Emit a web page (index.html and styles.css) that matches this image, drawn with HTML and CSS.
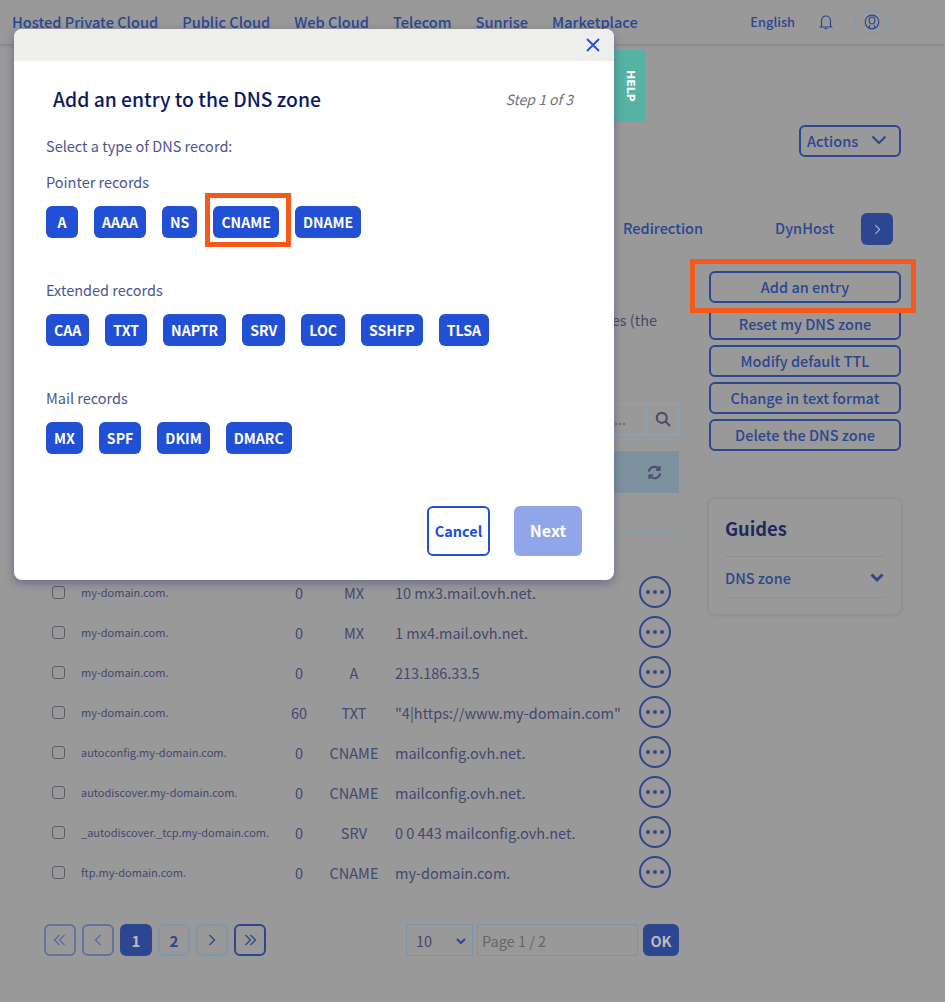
FILE: index.html
```html
<!DOCTYPE html>
<html lang="en">
  <head>
    <meta charset="UTF-8" />
    <title>DNS zone</title>
    <link rel="stylesheet" href="styles.css">
  </head>
  <body>
    <header class="topbar">
      <nav class="topnav">
        <a>Hosted Private Cloud</a>
        <a>Public Cloud</a>
        <a>Web Cloud</a>
        <a>Telecom</a>
        <a>Sunrise</a>
        <a>Marketplace</a>
      </nav>
      <div class="usernav">
        <span class="lang">English</span>
        <svg class="bell" viewBox="0 0 14 16" width="14" height="16" fill="none" stroke="#2c4690" stroke-width="1.2">
          <path d="M2.5 12V6.5a4.5 4.5 0 0 1 9 0V12l1 1H1.500z" />
          <path d="M5.500 14.500h3" />
        </svg>
        <span class="user-pill">
          <svg viewBox="0 0 16 16" width="16" height="16" fill="none" stroke="#2c4690" stroke-width="1.2">
            <circle cx="8" cy="8" r="6.800" />
            <ellipse cx="8" cy="6.500" rx="2.800" ry="3.500" />
            <path d="M5.500 14.500V11M10.500 14.500V11" />
          </svg>
        </span>
      </div>
    </header>

    <div class="help-tab"><span>HELP</span></div>

    <main class="page">
      <div class="page-actions">
        <button class="btn actions-btn">
          Actions
          <svg viewBox="0 0 16 10" width="16" height="10" fill="none" stroke="#2c4690" stroke-width="2"><path d="M1.500 1.500 8 8l6.500-6.500" /></svg>
        </button>
      </div>

      <div class="tabs">
        <div class="tab-list">
          <a>Redirection</a>
          <a>DynHost</a>
        </div>
        <button class="tab-next">
          <svg viewBox="0 0 8 12" width="7" height="11" fill="none" stroke="#a9b4d6" stroke-width="1.300"><path d="M1.500 1 6.500 6l-5 5" /></svg>
        </button>
      </div>

      <div class="columns">
        <section class="zone">
          <p class="zone-intro">es (the</p>
          <div class="search">
            <span class="search-input">...</span>
            <span class="search-btn">
              <svg viewBox="0 0 16 16" width="16" height="16" fill="none" stroke="#4a4d6e" stroke-width="2.200"><circle cx="6.800" cy="6.800" r="5" /><path d="m10.500 10.500 4.500 4.500" /></svg>
            </span>
          </div>
          <div class="table-head">
            <svg viewBox="0 0 16 16" width="15" height="15" fill="none" stroke="#4a4d6e" stroke-width="2"><path d="M2 7a6 6 0 0 1 10.500-3M14 9a6 6 0 0 1-10.500 3" /><path d="M13.500 1v4h-4M2.500 15v-4h4" /></svg>
          </div>
          <div class="row row-empty"></div>
          <div class="row row-empty"></div>

          <div class="row">
            <span class="check"></span><span class="domain">my-domain.com.</span><span class="ttl">0</span><span class="type">MX</span><span class="target">10 mx3.mail.ovh.net.</span><button class="more"><i></i><i></i><i></i></button>
          </div>
          <div class="row">
            <span class="check"></span><span class="domain">my-domain.com.</span><span class="ttl">0</span><span class="type">MX</span><span class="target">1 mx4.mail.ovh.net.</span><button class="more"><i></i><i></i><i></i></button>
          </div>
          <div class="row">
            <span class="check"></span><span class="domain">my-domain.com.</span><span class="ttl">0</span><span class="type">A</span><span class="target">213.186.33.5</span><button class="more"><i></i><i></i><i></i></button>
          </div>
          <div class="row">
            <span class="check"></span><span class="domain">my-domain.com.</span><span class="ttl">60</span><span class="type">TXT</span><span class="target">"4|https://www.my-domain.com"</span><button class="more"><i></i><i></i><i></i></button>
          </div>
          <div class="row">
            <span class="check"></span><span class="domain">autoconfig.my-domain.com.</span><span class="ttl">0</span><span class="type">CNAME</span><span class="target">mailconfig.ovh.net.</span><button class="more"><i></i><i></i><i></i></button>
          </div>
          <div class="row">
            <span class="check"></span><span class="domain">autodiscover.my-domain.com.</span><span class="ttl">0</span><span class="type">CNAME</span><span class="target">mailconfig.ovh.net.</span><button class="more"><i></i><i></i><i></i></button>
          </div>
          <div class="row">
            <span class="check"></span><span class="domain">_autodiscover._tcp.my-domain.com.</span><span class="ttl">0</span><span class="type">SRV</span><span class="target">0 0 443 mailconfig.ovh.net.</span><button class="more"><i></i><i></i><i></i></button>
          </div>
          <div class="row">
            <span class="check"></span><span class="domain">ftp.my-domain.com.</span><span class="ttl">0</span><span class="type">CNAME</span><span class="target">my-domain.com.</span><button class="more"><i></i><i></i><i></i></button>
          </div>

          <div class="pager">
            <div class="pages">
              <button class="pg pg-off">
                <svg viewBox="0 0 14 12" width="14" height="12" fill="none" stroke="#5a6c9f" stroke-width="1.300"><path d="M6.500 1 1.500 6l5 5M11.500 1l-5 5 5 5" /></svg>
              </button>
              <button class="pg pg-off">
                <svg viewBox="0 0 8 12" width="8" height="12" fill="none" stroke="#5a6c9f" stroke-width="1.300"><path d="M6.500 1 1.500 6l5 5" /></svg>
              </button>
              <button class="pg pg-current">1</button>
              <button class="pg pg-light">2</button>
              <button class="pg pg-light">
                <svg viewBox="0 0 8 12" width="8" height="12" fill="none" stroke="#2c4690" stroke-width="1.300"><path d="M1.500 1 6.500 6l-5 5" /></svg>
              </button>
              <button class="pg">
                <svg viewBox="0 0 14 12" width="14" height="12" fill="none" stroke="#2c4690" stroke-width="1.300"><path d="M2.500 1l5 5-5 5M7.500 1l5 5-5 5" /></svg>
              </button>
            </div>
            <div class="goto">
              <span class="page-size">10
                <svg viewBox="0 0 10 7" width="10" height="7" fill="none" stroke="#2c4690" stroke-width="2"><path d="M1 1l4 4 4-4" /></svg>
              </span>
              <span class="page-input">Page 1 / 2</span>
              <button class="ok">OK</button>
            </div>
          </div>
        </section>

        <aside class="side">
          <div class="side-actions">
            <button class="btn marked">Add an entry</button>
            <button class="btn">Reset my DNS zone</button>
            <button class="btn">Modify default TTL</button>
            <button class="btn">Change in text format</button>
            <button class="btn">Delete the DNS zone</button>
          </div>
          <div class="guides">
            <h3>Guides</h3>
            <div class="guide-row">
              <span>DNS zone</span>
              <svg viewBox="0 0 14 10" width="14" height="10" fill="none" stroke="#2c4690" stroke-width="3"><path d="M1.500 1.500 7 7l5.500-5.500" /></svg>
            </div>
          </div>
        </aside>
      </div>
    </main>

    <div class="modal">
      <div class="modal-top">
        <svg viewBox="0 0 14 14" width="14" height="14" fill="none" stroke="#2250d5" stroke-width="1.800"><path d="M1 1l12 12M13 1 1 13" /></svg>
      </div>
      <div class="modal-body">
        <div class="modal-title">
          <h2>Add an entry to the DNS zone</h2>
          <span class="step">Step 1 of 3</span>
        </div>
        <p class="lead">Select a type of DNS record:</p>

        <div class="group">
          <p>Pointer records</p>
          <div class="types">
            <button>A</button>
            <button>AAAA</button>
            <button>NS</button>
            <button class="marked">CNAME</button>
            <button>DNAME</button>
          </div>
        </div>
        <div class="group">
          <p>Extended records</p>
          <div class="types">
            <button>CAA</button>
            <button>TXT</button>
            <button>NAPTR</button>
            <button>SRV</button>
            <button>LOC</button>
            <button>SSHFP</button>
            <button>TLSA</button>
          </div>
        </div>
        <div class="group">
          <p>Mail records</p>
          <div class="types">
            <button>MX</button>
            <button>SPF</button>
            <button>DKIM</button>
            <button>DMARC</button>
          </div>
        </div>

        <div class="modal-foot">
          <button class="cancel">Cancel</button>
          <button class="next">Next</button>
        </div>
      </div>
    </div>
  </body>
</html>
```

FILE: styles.css
```css
* {
  box-sizing: border-box;
}
body {
  font-family: "Noto Sans CJK JP", "Open Sans", sans-serif;
  background: #999;
  margin: 0;
  color: #44476f;
  height: 1002px;
  overflow: hidden;
  position: relative;
  font-size: 14.5px;
  line-height: 20px;
}
button {
  font-family: inherit;
  cursor: pointer;
}
p,
h2,
h3 {
  margin: 0;
}

/* top bar */
.topbar {
  height: 44px;
  display: flex;
  justify-content: space-between;
  align-items: center;
  padding: 0 56px 0 12px;
  box-shadow: 0 1px 3px rgba(60, 60, 90, 0.25);
}
.topnav {
  display: flex;
  gap: 24px;
  font-size: 14.6px;
  font-weight: 500;
  color: #2c4690;
}
.usernav {
  display: flex;
  align-items: center;
  color: #2c4690;
  font-size: 12.8px;
  font-weight: 500;
}
.lang {
  margin-right: 24px;
}
.bell {
  margin-right: 21px;
}
.user-pill {
  width: 35px;
  height: 24px;
  border: 1px solid #7f9bb0;
  border-radius: 12px;
  display: flex;
  align-items: center;
  justify-content: center;
}
.help-tab {
  position: absolute;
  left: 614px;
  top: 50px;
  width: 31px;
  height: 72px;
  background: #56b3a3;
  color: #fff;
  font-size: 11px;
  font-weight: 700;
  font-family: "DejaVu Sans", sans-serif;
  display: flex;
  align-items: center;
  justify-content: center;
}
.help-tab span {
  writing-mode: vertical-rl;
}

/* page */
.page {
  padding: 81px 44px 0;
}
.btn {
  height: 32px;
  background: transparent;
  border: 2px solid #2c4690;
  border-radius: 6px;
  color: #2c4690;
  font-size: 14.5px;
  font-weight: 500;
  padding: 0 0 2px;
}
.page-actions {
  display: flex;
  justify-content: flex-end;
}
.actions-btn {
  width: 102px;
  display: flex;
  align-items: center;
  justify-content: space-between;
  padding: 0 12px 2px 6px;
}
.tabs {
  margin-top: 56px;
  display: flex;
  align-items: flex-start;
}
.tab-list {
  width: 809px;
  height: 37px;
  border-bottom: 1px solid #8c9aa6;
  display: flex;
  padding: 5px 0 0 579px;
  gap: 72px;
  font-size: 14.5px;
  font-weight: 500;
  color: #2c4690;
}
.tab-next {
  width: 32px;
  height: 32px;
  margin-left: 8px;
  border: 0;
  border-radius: 6px;
  background: #2c4690;
  display: flex;
  align-items: center;
  justify-content: center;
}
.columns {
  display: flex;
  gap: 30px;
  margin-top: 21px;
}

/* dns table */
.zone {
  width: 635px;
}
.zone-intro {
  margin-top: 39px;
  text-align: right;
  padding-right: 22px;
  height: 20px;
}
.search {
  margin-top: 73px;
  display: flex;
  justify-content: flex-end;
  height: 32px;
}
.search-input {
  width: 65px;
  border: 1px solid #8ba4b6;
  border-right: 0;
  padding-left: 32px;
  color: #666;
  line-height: 30px;
}
.search-btn {
  width: 33px;
  border: 1px solid #8ba4b6;
  display: flex;
  align-items: center;
  justify-content: center;
}
.table-head {
  margin-top: 16px;
  height: 42px;
  background: #7d929e;
  display: flex;
  align-items: center;
  justify-content: flex-end;
  padding-right: 17px;
}
.row {
  height: 40px;
  border-bottom: 1px solid #85a0b0;
  display: flex;
  align-items: center;
  padding-left: 8px;
}
.row-empty {
  height: 39.500px;
}
.check {
  width: 13px;
  height: 13px;
  margin-top: 1px;
  border: 1px solid #5c5c66;
  border-radius: 3px;
  flex: none;
}
.domain {
  width: 200px;
  margin-left: 16px;
  font-size: 11px;
  white-space: nowrap;
}
.ttl {
  width: 36px;
  padding-top: 2px;
  text-align: center;
  flex: none;
}
.type {
  width: 74px;
  padding-top: 2px;
  text-align: center;
  flex: none;
}
.target {
  margin-left: 4px;
  padding-top: 2px;
  flex: 1;
}
.more {
  width: 32px;
  height: 32px;
  margin-right: 8px;
  border: 2px solid #2c4690;
  border-radius: 50%;
  background: transparent;
  display: flex;
  align-items: center;
  justify-content: center;
  gap: 3px;
  padding: 0;
}
.more i {
  width: 4px;
  height: 4px;
  border-radius: 50%;
  background: #2c4690;
}

/* pagination */
.pager {
  margin-top: 32px;
  display: flex;
  justify-content: space-between;
}
.pages {
  display: flex;
  gap: 6px;
}
.pg {
  width: 32px;
  height: 32px;
  border: 2px solid #2c4690;
  border-radius: 6px;
  background: transparent;
  color: #2c4690;
  font-size: 15px;
  font-weight: 700;
  padding: 0;
  display: flex;
  align-items: center;
  justify-content: center;
}
.pg-off {
  border-color: #62739f;
}
.pg-light {
  border-color: #8097ab;
}
.pg-current {
  background: #2c4690;
  color: #bbb;
}
.goto {
  display: flex;
  gap: 4px;
  height: 32px;
}
.page-size {
  width: 67px;
  border: 1px solid #7596ae;
  padding: 2px 6px 0 9px;
  display: flex;
  align-items: center;
  justify-content: space-between;
}
.page-input {
  width: 161px;
  border: 1px solid #7596ae;
  padding-left: 4px;
  line-height: 32px;
  color: #666;
}
.ok {
  width: 36px;
  margin-left: 1px;
  border: 0;
  border-radius: 6px;
  background: #2c4690;
  color: #bbb;
  font-size: 14.5px;
  font-weight: 700;
  padding: 0;
}

/* right column */
.side {
  width: 192px;
}
.side-actions {
  display: flex;
  flex-direction: column;
  gap: 5px;
}
.side-actions .marked {
  position: relative;
}
.side-actions .marked::after {
  content: "";
  position: absolute;
  top: -14px;
  left: -21px;
  right: -17px;
  bottom: -12px;
  border: 5px solid #f4581a;
  z-index: 2;
}
.guides {
  margin-top: 48px;
  height: 115px;
  padding: 17px 16px 0;
  border-radius: 6px;
  box-shadow: 0 0 4px rgba(70, 70, 110, 0.3);
}
.guides h3 {
  font-size: 18.3px;
  line-height: 24px;
  color: #1d2a5e;
  padding-bottom: 16px;
  border-bottom: 1px solid #8f8f93;
}
.guide-row {
  height: 41px;
  border-bottom: 1px solid #8f8f93;
  display: flex;
  align-items: center;
  justify-content: space-between;
  padding: 2px 1px 0 0;
  font-size: 14.5px;
  font-weight: 500;
  color: #2c4690;
}

/* modal */
.modal {
  position: absolute;
  left: 14px;
  top: 29px;
  width: 600px;
  height: 551px;
  background: #fff;
  border-radius: 8px;
  overflow: hidden;
  box-shadow: 0 3px 10px rgba(50, 50, 110, 0.45);
}
.modal-top {
  height: 32px;
  background: #eeeeed;
  display: flex;
  align-items: center;
  justify-content: flex-end;
  padding-right: 14px;
}
.modal-body {
  padding: 0 32px;
  color: #4d5693;
}
.modal-title {
  height: 77px;
  padding: 0 9px 1px 7px;
  display: flex;
  align-items: center;
  justify-content: space-between;
}
.modal-title h2 {
  font-size: 19.3px;
  font-weight: 500;
  color: #0b1a5e;
}
.step {
  font-size: 14px;
  font-style: italic;
  color: #70707a;
}
.lead {
  margin-top: -2px;
  height: 28px;
  padding-top: 0;
}
.group {
  margin-top: 8px;
  height: 100px;
}
.group + .group {
  margin-top: 8px;
}
.types {
  display: flex;
  gap: 16px;
  margin-top: 14px;
}
.types button {
  height: 32px;
  min-width: 32px;
  padding: 0 8px;
  border: 0;
  border-radius: 6px;
  background: #2250d5;
  color: #fff;
  font-size: 14.1px;
  font-weight: 700;
}
.types .marked {
  position: relative;
}
.types .marked::after {
  content: "";
  position: absolute;
  top: -13px;
  left: -8px;
  right: -12px;
  bottom: -9px;
  border: 5px solid #f4581a;
}
.modal-foot {
  margin-top: 18px;
  display: flex;
  justify-content: flex-end;
  gap: 24px;
}
.modal-foot button {
  height: 50px;
  border-radius: 6px;
  font-weight: 700;
  padding: 0 0 2px;
}
.cancel {
  width: 63px;
  background: #fff;
  border: 2px solid #2250d5;
  color: #2250d5;
  font-size: 14.5px;
}
.next {
  width: 68px;
  background: #91a6e8;
  border: 0;
  color: #fff;
  font-size: 16px;
}
```
